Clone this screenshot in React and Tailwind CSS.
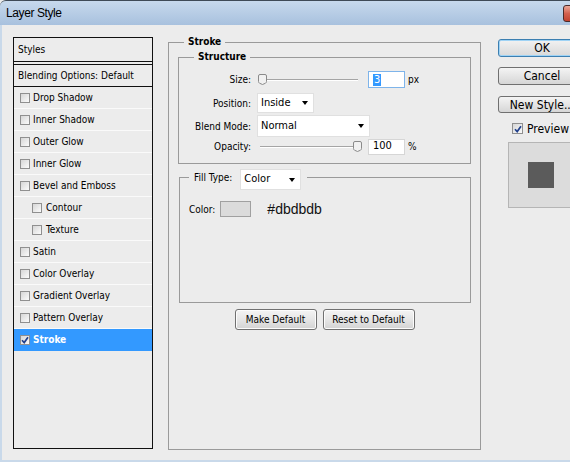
import React from "react";

const EFFECTS = [
  { label: "Drop Shadow" },
  { label: "Inner Shadow" },
  { label: "Outer Glow" },
  { label: "Inner Glow" },
  { label: "Bevel and Emboss" },
  { label: "Contour", indent: true },
  { label: "Texture", indent: true },
  { label: "Satin" },
  { label: "Color Overlay" },
  { label: "Gradient Overlay" },
  { label: "Pattern Overlay" },
  { label: "Stroke", active: true },
];

function Checkbox({ checked, size = "small" }) {
  return (
    <span
      className={
        size === "small"
          ? "flex h-[10px] w-[10px] shrink-0 items-center justify-center border border-[#8f8f8f] bg-linear-to-br from-[#d6d6d6] to-[#fbfbfb]"
          : "flex h-[11px] w-[11px] shrink-0 items-center justify-center border border-[#8f8f8f] bg-linear-to-br from-[#d6d6d6] to-[#fbfbfb]"
      }
    >
      {checked && (
        <svg viewBox="0 0 8 8" className="h-[8px] w-[8px]">
          <path d="M1 4.2 L3.2 6.6 L7 1.2" fill="none" stroke="#21408c" strokeWidth="1.7" />
        </svg>
      )}
    </span>
  );
}

function Select({ value, className }) {
  return (
    <div
      className={`flex shrink-0 items-center justify-between border border-[#e0e0e0] bg-white pl-[3px] pr-[5px] text-[11px] ${className}`}
    >
      <span>{value}</span>
      <span className="h-0 w-0 border-x-[3.5px] border-t-[4px] border-x-transparent border-t-black" />
    </div>
  );
}

function Slider({ full }) {
  return (
    <div className="relative ml-[6px] h-[17px] w-[104px] shrink-0">
      <div className="absolute left-[3px] right-[3px] top-[8px] h-[2px] border-t border-[#a5a5a5] bg-white" />
      <svg
        viewBox="0 0 9 11"
        className={
          full
            ? "absolute left-[96px] top-[3px] h-[11px] w-[9px]"
            : "absolute left-[1px] top-[3px] h-[11px] w-[9px]"
        }
      >
        <path
          d="M2 0.5 H7 Q8.5 0.5 8.5 2 V7.5 Q8.5 8.5 7.5 9.2 L4.5 10.5 L1.5 9.2 Q0.5 8.5 0.5 7.5 V2 Q0.5 0.5 2 0.5 Z"
          fill="#f1f1f1"
          stroke="#8a8a8a"
        />
      </svg>
    </div>
  );
}

function PushButton({ children, width }) {
  return (
    <button
      type="button"
      className={`flex h-[21px] items-center justify-center rounded-[3px] border border-[#707070] bg-linear-to-b from-[#f4f4f4] via-[#e6e6e6] to-[#d3d3d3] text-[10px] text-black shadow-[inset_0_0_0_1px_#fcfcfc] ${width}`}
    >
      {children}
    </button>
  );
}

export default function App() {
  return (
    <div className="relative h-[462px] w-[570px] overflow-hidden bg-[#ececec] font-['DejaVu_Sans_Condensed','Liberation_Sans',sans-serif] text-[10px] text-black">
      {/* Barre de titre */}
      <div className="flex h-[25px] items-center rounded-tl-[6px] border-t border-[#3f4a57] bg-linear-to-b from-[#c7d9ed] to-[#a8c1de] pl-[6px]">
        <span className="font-['Liberation_Sans',sans-serif] text-[12px] tracking-[-0.4px]">Layer Style</span>
        <div className="ml-auto mr-[-36px] h-[17px] w-[43px] shrink-0 rounded-[3px] border border-[#4a2b2b] bg-linear-to-b from-[#eaa899] via-[#d2604f] to-[#c2412e]" />
      </div>

      <div className="flex h-[437px] items-start border-b-2 border-l-2 border-[#c9d9ea]">
        {/* Liste des styles */}
        <div className="ml-[11px] mt-[12px] h-[412px] w-[140px] shrink-0 border border-[#111]">
          <div className="flex h-[24px] items-center border-b border-[#111] pl-[4px]">Styles</div>
          <div className="mt-[2px] flex h-[23px] items-center border-y border-[#111] pl-[4px]">
            Blending Options: Default
          </div>
          {EFFECTS.map((effect) => (
            <div
              key={effect.label}
              className={
                effect.active
                  ? "flex h-[22px] items-center gap-[3px] border-b border-[#3399ff] bg-[#3399ff] pl-[6px] font-bold text-white"
                  : effect.indent
                    ? "flex h-[22px] items-center gap-[4px] border-b border-[#fafafa] pl-[18px]"
                    : "flex h-[22px] items-center gap-[3px] border-b border-[#fafafa] pl-[6px]"
              }
            >
              <Checkbox checked={effect.active} />
              <span>{effect.label}</span>
            </div>
          ))}
        </div>

        {/* Stroke */}
        <fieldset className="ml-[15px] mt-[10px] h-[415px] w-[313px] shrink-0 border border-[#9a9a9a]">
          <legend className="ml-[15px] px-[4px] font-bold leading-[14px]">Stroke</legend>

          <fieldset className="mx-[9px] mt-[1px] border border-[#9a9a9a] pb-[8px]">
            <legend className="ml-[15px] px-[4px] font-bold leading-[14px]">Structure</legend>

            <div className="mt-[7px] flex h-[17px] items-center">
              <span className="w-[72px] shrink-0 text-right">Size:</span>
              <Slider />
              <div className="ml-[7px] flex h-[17px] w-[37px] shrink-0 items-center border border-[#7eb4ea] bg-white pl-[4px] text-[11px]">
                <span className="bg-[#3399ff] px-[1px] leading-[12px] text-white">3</span>
              </div>
              <span className="ml-[3px]">px</span>
            </div>

            <div className="mt-[5px] flex h-[20px] items-center">
              <span className="w-[72px] shrink-0 text-right">Position:</span>
              <Select value="Inside" className="ml-[6px] h-[20px] w-[57px]" />
            </div>

            <div className="mt-[2px] flex h-[22px] items-center">
              <span className="w-[72px] shrink-0 text-right">Blend Mode:</span>
              <Select value="Normal" className="ml-[6px] h-[22px] w-[113px]" />
            </div>

            <div className="mt-[1px] flex h-[17px] items-center">
              <span className="w-[72px] shrink-0 text-right">Opacity:</span>
              <Slider full />
              <div className="ml-[7px] flex h-[16px] w-[37px] shrink-0 items-center border border-[#d6d6d6] bg-white pl-[4px] text-[11px]">
                100
              </div>
              <span className="ml-[3px]">%</span>
            </div>
          </fieldset>

          <fieldset className="ml-[10px] mr-[9px] mt-[5px] h-[134px] border border-[#9a9a9a]">
            <legend className="ml-[9px] flex h-[16px] items-start pl-[5px] pr-[6px]">
              <span className="mt-[3px] leading-[12px]">Fill Type:</span>
              <Select value="Color" className="ml-[8px] h-[21px] w-[61px]" />
            </legend>

            <div className="mt-[16px] flex h-[16px] items-center pl-[9px]">
              <span>Color:</span>
              <span className="ml-[5px] h-[16px] w-[31px] shrink-0 border border-[#a0a0a0] bg-[#dbdbdb]" />
              <span className="ml-[16px] font-['Liberation_Sans',sans-serif] text-[14px] text-[#111]">#dbdbdb</span>
            </div>
          </fieldset>

          <div className="mt-[6px] flex justify-center gap-[6px]">
            <PushButton width="w-[82px]">Make Default</PushButton>
            <PushButton width="w-[92px]">Reset to Default</PushButton>
          </div>
        </fieldset>

        {/* Boutons de droite */}
        <div className="ml-[17px] mt-[14px] flex w-[88px] shrink-0 flex-col text-[12px]">
          <button
            type="button"
            className="flex h-[18px] items-center justify-center rounded-[3px] border border-[#3c7fb1] bg-linear-to-b from-[#f2f2f2] to-[#d9d9d9] shadow-[inset_0_0_0_1px_#9fd3f5]"
          >
            OK
          </button>
          <button
            type="button"
            className="mt-[10px] flex h-[18px] items-center justify-center rounded-[3px] border border-[#707070] bg-linear-to-b from-[#f4f4f4] to-[#d6d6d6]"
          >
            Cancel
          </button>
          <button
            type="button"
            className="mt-[11px] flex h-[17px] items-center justify-center rounded-[3px] border border-[#707070] bg-linear-to-b from-[#f4f4f4] to-[#d6d6d6]"
          >
            New Style...
          </button>
          <div className="mt-[8px] flex h-[15px] items-center gap-[4px] pl-[14px]">
            <Checkbox checked size="large" />
            <span>Preview</span>
          </div>
          <div className="ml-[10px] mt-[6px] flex h-[66px] w-[66px] items-center justify-center border border-[#b5b5b5] bg-[#dcdcdc]">
            <div className="h-[26px] w-[26px] bg-[#5b5b5b]" />
          </div>
        </div>
      </div>
    </div>
  );
}
